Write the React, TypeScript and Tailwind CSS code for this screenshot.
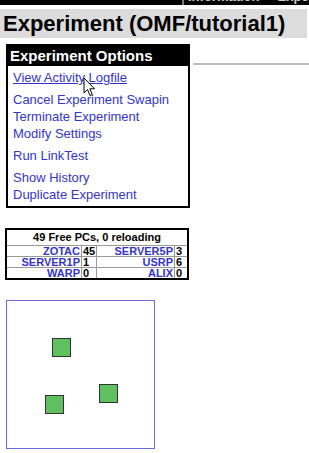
export default function App() {
  const groups: { label: string; active?: boolean }[][] = [
    [{ label: "View Activity Logfile", active: true }],
    [
      { label: "Cancel Experiment Swapin" },
      { label: "Terminate Experiment" },
      { label: "Modify Settings" },
    ],
    [{ label: "Run LinkTest" }],
    [{ label: "Show History" }, { label: "Duplicate Experiment" }],
  ];

  const rows = [
    ["ZOTAC", "45", "SERVER5P", "3"],
    ["SERVER1P", "1", "USRP", "6"],
    ["WARP", "0", "ALIX", "0"],
  ];

  const nodes = [
    { left: 45, top: 37 },
    { left: 92, top: 83 },
    { left: 38, top: 94 },
  ];

  return (
    <div className="relative h-[453px] w-[309px] overflow-hidden bg-white font-['Liberation_Sans',Arial,sans-serif]">
      {/* clipped top nav */}
      <div className="flex h-[5px] overflow-hidden bg-black">
        <div className="w-[182px] shrink-0" />
        <div className="w-[2px] shrink-0 bg-[#777]" />
        <div className="-mt-[10px] flex shrink-0 gap-[18px] whitespace-nowrap pl-[4px] text-[13px] font-bold leading-[14px] text-[#ccc]">
          <span>Information</span>
          <span>Experimentation</span>
        </div>
      </div>

      {/* title */}
      <div className="mt-[4px] h-[29px] w-[307px] bg-[#dcdcdc] pl-[3px] text-[22px] font-bold leading-[29px] text-black">
        Experiment (OMF/tutorial1)
      </div>

      <div className="mt-[6px] flex">
        <div className="ml-[6px] w-[184px] border-2 border-black">
          <div className="h-[20px] bg-black pl-[2px] text-[15px] font-bold leading-[19px] text-white">
            Experiment Options
          </div>
          <div className="flex flex-col gap-[5px] px-[5px] pt-[3px] pb-[3px] text-[13px] leading-[17px] text-[#3434c8]">
            {groups.map((g, gi) => (
              <div key={gi} className="flex flex-col">
                {g.map((l) => (
                  <span key={l.label} className={l.active ? "underline" : ""}>
                    {l.label}
                  </span>
                ))}
              </div>
            ))}
          </div>
        </div>
        <div className="ml-[3px] mt-[19px] h-[2px] flex-1 bg-[#bcbcbc]" />
      </div>

      {/* free PCs table */}
      <div className="ml-[5px] mt-[20px] w-[184px] border-2 border-black text-[11px] font-bold">
        <div className="border-b border-[#999] py-[2px] text-center leading-[11px] text-black">
          49 Free PCs, 0 reloading
        </div>
        {rows.map((r, i) => (
          <div
            key={r[0]}
            className={`grid grid-cols-[75px_15px_78px_1fr] leading-[10px] ${i < rows.length - 1 ? "border-b border-[#999]" : ""}`}
          >
            <div className="border-r border-[#999] pr-[1px] text-right text-[#3434c8]">{r[0]}</div>
            <div className="border-r border-[#999] pl-[1px] text-black">{r[1]}</div>
            <div className="border-r border-[#999] pr-[1px] text-right text-[#3434c8]">{r[2]}</div>
            <div className="pl-[1px] text-black">{r[3]}</div>
          </div>
        ))}
      </div>

      {/* topology canvas */}
      <div className="relative ml-[6px] mt-[20px] h-[149px] w-[149px] border-[1.5px] border-[#6a6ae0] bg-white">
        {nodes.map((n, i) => (
          <div
            key={i}
            className="absolute h-[19px] w-[19px] border-[1.5px] border-[#333] bg-[#5ec05e]"
            style={{ left: n.left, top: n.top }}
          />
        ))}
      </div>

      {/* mouse cursor */}
      <svg className="absolute left-[83px] top-[77px]" width="13" height="20" viewBox="0 0 13 20">
        <path d="M1 1 L1 16 L4.5 12.5 L7 18.5 L9.3 17.5 L6.8 11.8 L11.5 11.8 Z" fill="white" stroke="black" strokeWidth="1" strokeLinejoin="round" />
      </svg>
    </div>
  );
}
